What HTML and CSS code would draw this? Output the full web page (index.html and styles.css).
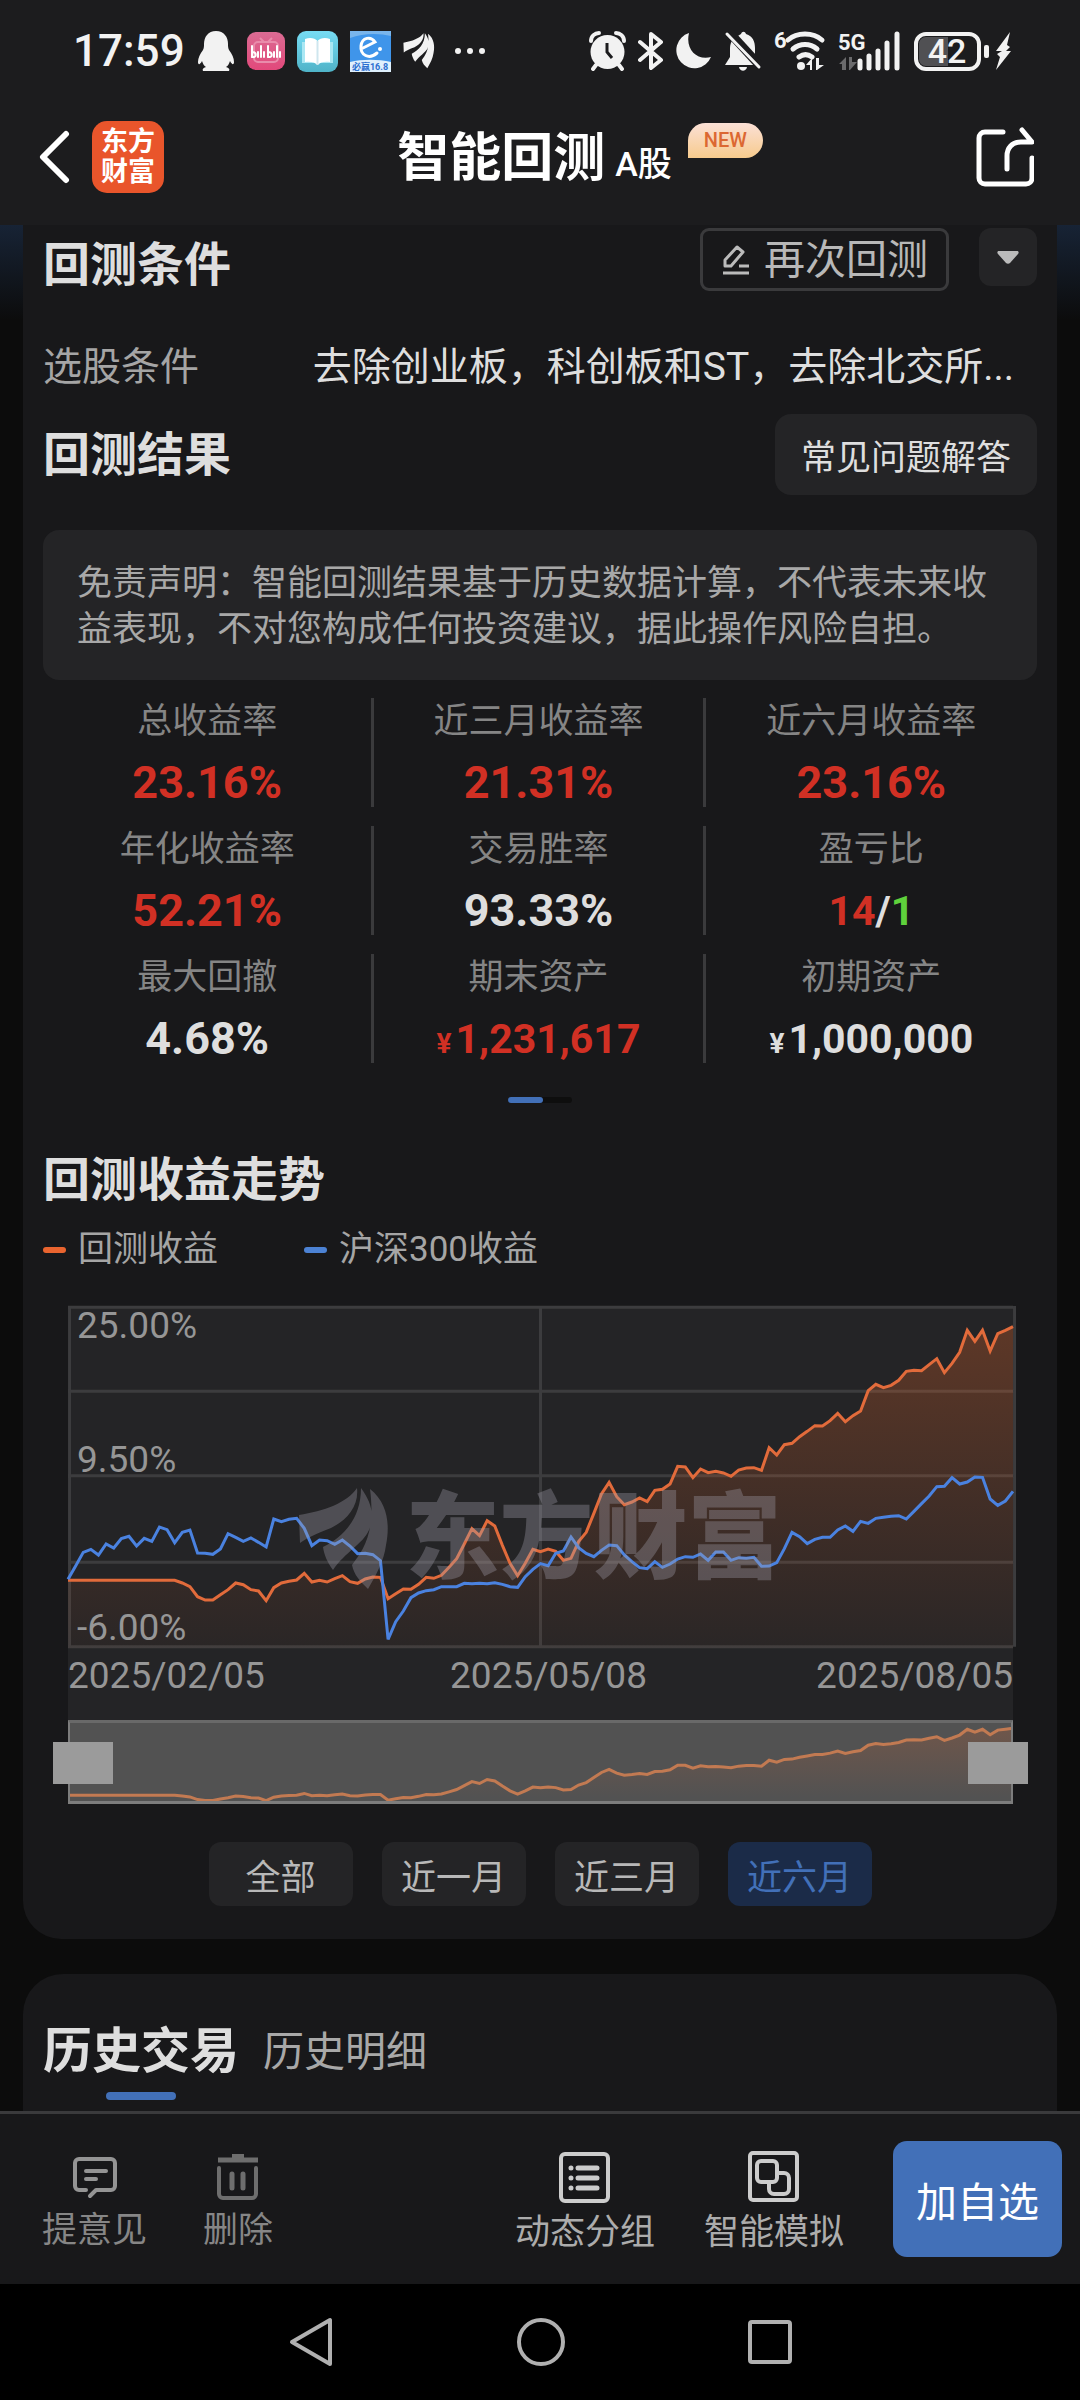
FILE: index.html
```html
<!DOCTYPE html>
<html lang="zh-CN">
<head>
  <meta charset="UTF-8" />
  <meta name="viewport" content="width=device-width, initial-scale=1.0"/>
  <title>智能回测</title>
  <link rel="stylesheet" href="styles.css">
</head>
<body>

  <div class="status-bar">
    <div class="status-left">
      <span class="clock">17:59</span>
      <svg width="38" height="42" viewBox="0 0 38 42" fill="#f2f2f2"><path d="M19 1c-8 0-12 6-12 13 0 2 0 4-1 6-3 4-5 8-5 12 0 3 2 3 4-1 1 3 2 5 4 6-3 1-4 2-3 4h26c1-2 0-3-3-4 2-1 3-3 4-6 2 4 4 4 4 1 0-4-2-8-5-12-1-2-1-4-1-6C31 7 27 1 19 1z"/></svg>
      <svg width="38" height="38" viewBox="0 0 38 38"><defs><linearGradient id="pink" x1="0" y1="0" x2="0" y2="1"><stop offset="0" stop-color="#db6b93"/><stop offset="1" stop-color="#e2497b"/></linearGradient></defs><rect width="38" height="38" rx="9" fill="url(#pink)"/><path d="M13 6l4 4M25 6l-4 4" stroke="#e98cab" stroke-width="2"/><rect x="7" y="10" width="24" height="20" rx="4" fill="none" stroke="#e98cab" stroke-width="2"/><g fill="none" stroke="#fff" stroke-width="2" stroke-linecap="round"><path d="M5 14v11c5 1 5-5 0-5M11 20v5M14 14v11M17 20v5M21 14v11c5 1 5-5 0-5M27 20v5M30 14v11M33 20v5"/></g></svg>
      <svg width="41" height="41" viewBox="0 0 41 41"><defs><linearGradient id="cyan" x1="0" y1="0" x2="0" y2="1"><stop offset="0" stop-color="#77dcf4"/><stop offset="1" stop-color="#4fb3c8"/></linearGradient></defs><rect width="41" height="41" rx="9" fill="url(#cyan)"/><path d="M5 11h31v21H5z" fill="#a9e7f3"/><path d="M8 8c5-2 10-1 12.500 2C23 7 28 6 33 8v23c-5-1-10 0-12.500 3C18 31 13 30 8 31z" fill="#fff"/><path d="M20.500 10v24" stroke="#cfe6ee" stroke-width="2"/></svg>
      <svg width="41" height="41" viewBox="0 0 41 41"><rect width="41" height="41" fill="#3f95ea"/><path d="M0 0h41v5c-12-3-28-3-41 2z" fill="#79b5ec"/><path d="M0 31c12-3 28-3 41 0v10H0z" fill="#dff0fd"/><path d="M13 17l12-6c-4-6-13-5-14 4-1 9 8 14 16 7" fill="none" stroke="#fff" stroke-width="3" stroke-linecap="round"/><circle cx="30" cy="18" r="2" fill="#fff"/><text class="tiny" x="20" y="39" text-anchor="middle" fill="#2b6fd0">必赢16.8</text></svg>
      <svg width="32" height="36" viewBox="0 0 90 104" fill="#f2f2f2"><path d="M0 28C25 24 48 16 58 1c2 18-10 32-26 40C18 46 6 52 1 56zM24 60c20-10 38-28 38-59 10 14 14 26 8 42-6 14-24 22-36 40-6-8-9-16-10-23zM53 78c10-14 24-30 18-76 18 14 20 36 16 56-2 16-10 30-18 44-8-8-14-14-16-24z"/></svg>
      <svg width="40" height="8" viewBox="0 0 40 8" fill="#f2f2f2"><circle cx="11" cy="4" r="3"/><circle cx="23" cy="4" r="3"/><circle cx="35" cy="4" r="3"/></svg>
    </div>
    <div class="status-right">
      <svg width="37" height="40" viewBox="0 0 37 40"><circle cx="18.500" cy="21" r="17" fill="#f2f2f2"/><path d="M2 10c0-5 4-8 8-8M35 10c0-5-4-8-8-8" fill="none" stroke="#f2f2f2" stroke-width="4" stroke-linecap="round"/><path d="M7 34l-3 4M30 34l3 4" stroke="#f2f2f2" stroke-width="4" stroke-linecap="round"/><path d="M18 12v9l5 6" fill="none" stroke="#1c1c1e" stroke-width="3"/></svg>
      <svg width="26" height="40" viewBox="0 0 26 40" fill="none" stroke="#f2f2f2" stroke-width="4" stroke-linejoin="round" stroke-linecap="round"><path d="M2 11l21 18-10 8V3l10 8L2 29"/></svg>
      <svg width="36" height="38" viewBox="0 0 36 38"><path d="M13 1A18 18 0 1 0 35 25C21 29 9 17 13 1z" fill="#f2f2f2"/></svg>
      <svg width="38" height="42" viewBox="0 0 38 42"><path d="M17 4c1-3 4-3 5 0 7 2 9 8 9 14v9l3 8H1l5-8v-9c0-3 1-6 3-9z" fill="#f2f2f2"/><path d="M15 37h8c-1 5-7 5-8 0z" fill="#f2f2f2"/><path d="M4 1l33 36" stroke="#1c1c1e" stroke-width="9"/><path d="M3 4l32 33" stroke="#f2f2f2" stroke-width="3" stroke-linecap="round"/></svg>
      <svg width="52" height="46" viewBox="0 -2 52 46"><text class="sup" x="0" y="18" fill="#f2f2f2">6</text><g fill="none" stroke="#f2f2f2" stroke-width="5" stroke-linecap="round"><path d="M14 10c9-8 25-8 34 0M19 19c7-6 17-6 24 0M25 27c4-3 9-3 13 0"/></g><circle cx="27" cy="36" r="4" fill="#f2f2f2"/><path d="M38 40V28l-6 7h4v5zM42 40V28h3v7h5l-7 5z" fill="#f2f2f2"/></svg>
      <svg width="64" height="46" viewBox="0 -2 64 46"><text class="sup" x="0" y="20" fill="#f2f2f2">5G</text><path d="M8 40V27l-7 7h3v6zM11 40V27h3v5h5l-7 8z" fill="#6a6a6c"/><path d="M22 31v7M31 26v12M40 21v17M49 13v25M59 4v34" stroke="#f2f2f2" stroke-width="5" stroke-linecap="round"/></svg>
      <svg width="98" height="40" viewBox="0 0 98 40"><rect x="2" y="3" width="63" height="35" rx="10" fill="#1c1c1e" stroke="#f2f2f2" stroke-width="4"/><path d="M12 6h22v29H12c-4 0-7-3-7-7V13c0-4 3-7 7-7z" fill="#505053"/><text class="battery" x="33" y="32" text-anchor="middle" fill="#f2f2f2">42</text><rect x="70" y="14" width="5" height="13" rx="2" fill="#f2f2f2"/><path d="M96 1L82 20h6l-5 3 3 3-4 13 15-19h-5l4-4-3-2z" fill="#f2f2f2"/></svg>
    </div>
  </div>

  <header class="app-bar">
    <div class="app-left">
      <button class="icon-btn" aria-label="返回">
        <svg width="31" height="54" viewBox="0 0 31 54" fill="none" stroke="#fff" stroke-width="6" stroke-linecap="round" stroke-linejoin="round"><path d="M27 4L4 27l23 23"/></svg>
      </button>
      <a class="logo" href="#">东方<br>财富</a>
    </div>
    <h1>智能回测<small>A股</small><span class="badge">NEW</span></h1>
    <button class="icon-btn share" aria-label="分享">
      <svg width="58" height="60" viewBox="0 0 58 60" fill="none" stroke="#fff" stroke-width="5" stroke-linecap="round" stroke-linejoin="round"><path d="M27 5H9a6 6 0 0 0-6 6v40a6 6 0 0 0 6 6h41a6 6 0 0 0 6-6V31"/><path d="M31 42V29c0-8 5-14 14-14h11L46 3"/></svg>
    </button>
  </header>

  <main>
    <section class="card">
      <div class="row row-top">
        <h2>回测条件</h2>
        <div class="row-actions">
          <button class="rerun">
            <svg width="28" height="30" viewBox="0 0 28 30" fill="none" stroke="#bbb" stroke-width="3" stroke-linejoin="round"><path d="M3 15L15 2l6 5L9 21H3zM17 21h10M1 28h26"/></svg>
            再次回测
          </button>
          <button class="dropdown" aria-label="展开">
            <svg width="22" height="13" viewBox="0 0 22 13" fill="#bbb"><path d="M2 0h18c2 0 2 2 1 3l-8 9c-1 1-3 1-4 0L1 3C0 2 0 0 2 0z"/></svg>
          </button>
        </div>
      </div>

      <div class="row condition">
        <span class="condition-name">选股条件</span>
        <span class="condition-value">去除创业板，科创板和ST，去除北交所...</span>
      </div>

      <div class="row result">
        <h2>回测结果</h2>
        <button class="faq">常见问题解答</button>
      </div>

      <p class="disclaimer">免责声明：智能回测结果基于历史数据计算，不代表未来收益表现，不对您构成任何投资建议，据此操作风险自担。</p>

      <dl class="stats">
        <div><dt>总收益率</dt><dd class="red">23.16%</dd></div>
        <div><dt>近三月收益率</dt><dd class="red">21.31%</dd></div>
        <div><dt>近六月收益率</dt><dd class="red">23.16%</dd></div>
        <div><dt>年化收益率</dt><dd class="red">52.21%</dd></div>
        <div><dt>交易胜率</dt><dd>93.33%</dd></div>
        <div><dt>盈亏比</dt><dd class="amount"><span class="red">14</span>/<span class="green">1</span></dd></div>
        <div><dt>最大回撤</dt><dd>4.68%</dd></div>
        <div><dt>期末资产</dt><dd class="amount red"><small>¥</small>1,231,617</dd></div>
        <div><dt>初期资产</dt><dd class="amount"><small>¥</small>1,000,000</dd></div>
      </dl>
      <div class="pager"><span></span></div>

      <h2 class="trend-title">回测收益走势</h2>
      <div class="legend">
        <span class="legend-item orange">回测收益</span>
        <span class="legend-item blue">沪深300收益</span>
      </div>

      <div class="chart">
        <div class="plot">
          <svg class="lines" viewBox="0 48 124 1026" preserveAspectRatio="none">
            <defs>
              <linearGradient id="fade" gradientUnits="userSpaceOnUse" x1="0" y1="110" x2="0" y2="1070">
                <stop offset="0" stop-color="#f26a2a" stop-opacity="0.28"/>
                <stop offset="1" stop-color="#f26a2a" stop-opacity="0.03"/>
              </linearGradient>
            </defs>
            <path class="grid" d="M0 52H124M0 304H124M0 557H124M0 817H124M0 1070H124M0.200 48V1074M62 48V1070M124.200 48V1070"/>
            <polygon id="area" fill="url(#fade)"/>
            <polyline id="strategy" class="line line-orange"/>
            <polyline id="index" class="line line-blue"/>
          </svg>
          <span class="y-label y-top">25.00%</span>
          <span class="y-label y-mid">9.50%</span>
          <span class="y-label y-bottom">-6.00%</span>
          <div class="watermark">
            <svg width="90" height="104" viewBox="0 0 90 104" fill="currentColor"><path d="M0 28C25 24 48 16 58 1c2 18-10 32-26 40C18 46 6 52 1 56zM24 60c20-10 38-28 38-59 10 14 14 26 8 42-6 14-24 22-36 40-6-8-9-16-10-23zM53 78c10-14 24-30 18-76 18 14 20 36 16 56-2 16-10 30-18 44-8-8-14-14-16-24z"/></svg>
            <span>东方财富</span>
          </div>
        </div>
        <div class="dates"><span>2025/02/05</span><span class="date-mid">2025/05/08</span><span>2025/08/05</span></div>
        <div class="zoom-bar">
          <svg viewBox="0 16 124 954" preserveAspectRatio="none">
            <defs>
              <linearGradient id="miniFade" gradientUnits="userSpaceOnUse" x1="0" y1="110" x2="0" y2="900">
                <stop offset="0" stop-color="#f26a2a" stop-opacity="0.18"/>
                <stop offset="1" stop-color="#f26a2a" stop-opacity="0"/>
              </linearGradient>
            </defs>
            <polygon id="miniArea" fill="url(#miniFade)"/>
            <polyline id="miniLine" class="line line-mini"/>
          </svg>
          <input type="range" min="0" max="100" value="0" aria-label="开始日期">
          <input type="range" min="0" max="100" value="100" aria-label="结束日期">
        </div>
      </div>

      <div class="ranges">
        <button>全部</button>
        <button>近一月</button>
        <button>近三月</button>
        <button class="active">近六月</button>
      </div>
    </section>

    <section class="card history">
      <div class="tabs">
        <button class="tab active">历史交易</button>
        <button class="tab">历史明细</button>
      </div>
    </section>
  </main>

  <footer class="toolbar">
    <div class="tools tools-left">
      <button class="tool">
        <svg width="52" height="52" viewBox="0 0 52 52" fill="none" stroke="#949494" stroke-width="4" stroke-linecap="round" stroke-linejoin="round"><path d="M17 39h-7a4 4 0 0 1-4-4V12a4 4 0 0 1 4-4h32a4 4 0 0 1 4 4v23a4 4 0 0 1-4 4H27l-6 6M17 20h20M17 28h10"/></svg>
        提意见
      </button>
      <button class="tool">
        <svg width="52" height="52" viewBox="0 0 52 52" fill="none" stroke="#6e6e6e" stroke-width="5" stroke-linecap="round"><path d="M20 6h12" stroke-width="6" stroke-linecap="butt"/><path d="M6 9h40" stroke-linecap="butt"/><path d="M7 17v26a4 4 0 0 0 4 4h29a4 4 0 0 0 4-4V17" stroke-width="4"/><path d="M20 23v14M31 23v14"/></svg>
        删除
      </button>
    </div>
    <div class="tools">
      <button class="tool bright">
        <svg width="52" height="52" viewBox="0 0 52 52" fill="none" stroke="#ccc" stroke-width="5" stroke-linecap="round"><rect x="2" y="3" width="47" height="47" rx="4" stroke-width="4"/><path d="M12 17h0M19 17h19M12 27h0M19 27h19M12 37h0M19 37h19"/></svg>
        动态分组
      </button>
      <button class="tool bright">
        <svg width="52" height="52" viewBox="0 0 52 52" fill="none" stroke="#ccc" stroke-width="4"><rect x="2" y="2" width="47" height="47" rx="3"/><rect x="9" y="10" width="20" height="21" rx="4"/><path d="M29 22h7a5 5 0 0 1 5 5v11a5 5 0 0 1-5 5H26a5 5 0 0 1-5-5v-7"/></svg>
        智能模拟
      </button>
      <button class="add">加自选</button>
    </div>
  </footer>

  <nav class="system-nav">
    <button class="icon-btn" aria-label="后退"><svg width="46" height="52" viewBox="0 0 46 52"><path d="M42 4v44L4 26z"/></svg></button>
    <button class="icon-btn" aria-label="主页"><svg width="48" height="48" viewBox="0 0 48 48"><circle cx="24" cy="24" r="22"/></svg></button>
    <button class="icon-btn" aria-label="最近任务"><svg width="44" height="44" viewBox="0 0 44 44"><rect x="2" y="2" width="40" height="40" rx="2"/></svg></button>
  </nav>

  <script src="chart.js"></script>
</body>
</html>
```
FILE: styles.css
```css
* {
  box-sizing: border-box;
}

body {
  font-family: Roboto, "Noto Sans CJK SC", sans-serif;
  margin: 0;
  min-height: 100vh;
  display: flex;
  flex-direction: column;
  background: #0c0c0c;
  color: #dedede;
}

button {
  font: inherit;
  color: inherit;
  background: none;
  border: 0;
  padding: 0;
  cursor: pointer;
}

svg {
  display: block;
  flex: none;
}

h1, h2, p, dl, dd {
  margin: 0;
}

h2 {
  font-size: 47px;
  line-height: 74px;
  font-weight: 700;
}

/* Phone status bar */
.status-bar {
  height: 102px;
  padding: 0 68px 0 73px;
  display: flex;
  align-items: center;
  justify-content: space-between;
  background: #1c1c1e;
}

.status-left,
.status-right {
  display: flex;
  align-items: center;
  gap: 12px;
}

.clock {
  font-size: 44px;
  font-weight: 500;
  color: #f2f2f2;
}

.tiny {
  font-size: 9px;
  font-weight: 700;
}

.sup {
  font-size: 22px;
  font-weight: 700;
}

.battery {
  font-size: 34px;
  font-weight: 500;
}

/* Title bar */
.app-bar {
  display: grid;
  grid-template-columns: 1fr auto 1fr;
  align-items: center;
  padding: 0 46px 14px 39px;
  height: 123px;
  background: #1c1c1e;
}

.app-left {
  display: flex;
  align-items: center;
  gap: 22px;
}

.logo {
  width: 72px;
  height: 72px;
  border-radius: 15px;
  background: #e9552b;
  color: white;
  font-size: 27px;
  line-height: 30px;
  font-weight: 700;
  text-align: center;
  text-decoration: none;
  padding-top: 6px;
}

h1 {
  position: relative;
  padding: 10px 4px 0 0;
  font-size: 52px;
  line-height: 72px;
  font-weight: 700;
  color: white;
}

h1 small {
  font-size: 34px;
  font-weight: 500;
  margin-left: 10px;
}

.badge {
  position: absolute;
  left: 100%;
  top: 10px;
  margin-left: 12px;
  padding: 0 16px;
  border-radius: 18px 18px 18px 0;
  background: linear-gradient(#fbe0d6, #f7cb8d);
  color: #dc6832;
  font-size: 20px;
  line-height: 35px;
  font-weight: 500;
}

.share {
  justify-self: end;
}

main {
  flex: 1;
  padding: 0 23px;
  display: flex;
  flex-direction: column;
  gap: 35px;
  background: linear-gradient(#172335, #0c0c0c 95px);
}

.card {
  padding: 3px 20px 33px;
  background: #18181a;
  border-radius: 0 0 38px 38px;
}

.row {
  display: flex;
  justify-content: space-between;
  align-items: center;
}

.row-top {
  align-items: flex-start;
}

.row-actions {
  display: flex;
  gap: 30px;
}

.rerun {
  display: flex;
  align-items: center;
  gap: 14px;
  height: 63px;
  padding: 0 18px 0 19px;
  border: 3px solid #3a3a3c;
  border-radius: 9px;
  font-size: 41px;
  line-height: 56px;
  color: #b8b8b8;
}

.dropdown {
  display: flex;
  align-items: center;
  justify-content: center;
  width: 58px;
  height: 58px;
  border-radius: 12px;
  background: #242426;
}

.condition {
  margin-top: 35px;
  font-size: 39px;
  line-height: 60px;
}

.condition-name {
  color: #a5a5a5;
}

.condition-value {
  padding-right: 23px;
}

.result {
  margin-top: 17px;
}

.faq {
  height: 81px;
  padding: 0 26px;
  border-radius: 16px;
  background: #242426;
  font-size: 35px;
}

.disclaimer {
  margin-top: 35px;
  padding: 31px 35px 27px 34px;
  border-radius: 16px;
  background: #242426;
  color: #a8a8a8;
  font-size: 35px;
  line-height: 46px;
}

/* Result figures */
.stats {
  margin-top: 18px;
  display: grid;
  grid-template-columns: repeat(3, 1fr);
  row-gap: 19px;
  text-align: center;
}

.stats div {
  height: 109px;
  border-right: 3px solid #3a3a3c;
}

.stats div:nth-child(3n) {
  border-right: 0;
}

.stats dt {
  font-size: 35px;
  line-height: 48px;
  color: #858585;
}

.stats dd {
  font-size: 45px;
  line-height: 74px;
  font-weight: 700;
}

.stats dd.amount {
  font-size: 41px;
}

.stats small {
  font-size: 28px;
  margin-right: 4px;
}

.red {
  color: #d13024;
}

.green {
  color: #5fd13c;
}

.pager {
  width: 64px;
  height: 6px;
  margin: 34px auto 0;
  border-radius: 3px;
  background: #0e0e0e;
}

.pager span {
  display: block;
  width: 35px;
  height: 6px;
  border-radius: 3px;
  background: #4270b8;
}

.trend-title {
  margin-top: 40px;
}

.legend {
  display: flex;
  gap: 86px;
  margin-top: 10px;
  font-size: 35px;
  line-height: 46px;
  color: #a5a5a5;
}

.legend-item {
  display: flex;
  align-items: center;
  gap: 12px;
}

.legend-item::before {
  content: "";
  width: 23px;
  height: 6px;
  border-radius: 3px;
}

.orange::before {
  background: #e9642f;
}

.blue::before {
  background: #4c82d4;
}

/* Chart */
.chart {
  margin: 33px 24px 0 25px;
  background: #242426;
  color: #969696;
  font-size: 37px;
}

.plot {
  position: relative;
}

.lines {
  width: 100%;
  height: 342px;
  overflow: visible;
}

.grid {
  fill: none;
  stroke: #3c3c3e;
  stroke-width: 3px;
  vector-effect: non-scaling-stroke;
}

.line {
  fill: none;
  stroke-width: 3px;
  vector-effect: non-scaling-stroke;
}

.line-orange {
  stroke: #e26b3b;
}

.line-blue {
  stroke: #4a82e0;
}

.line-mini {
  stroke: #c27a52;
}

.y-label {
  position: absolute;
  left: 9px;
  line-height: 40px;
}

.y-top {
  top: 0;
}

.y-mid {
  top: 134px;
}

.y-bottom {
  bottom: 0;
}

.watermark {
  position: absolute;
  top: 181px;
  left: 0;
  right: 0;
  display: flex;
  justify-content: center;
  align-items: center;
  gap: 16px;
  color: #a3a1ad;
  opacity: 0.34;
  font-size: 94px;
  line-height: 104px;
  font-weight: 900;
}

.dates {
  display: flex;
  justify-content: space-between;
  line-height: 56px;
  padding-bottom: 16px;
}

.date-mid {
  padding-left: 16px;
}

.zoom-bar {
  position: relative;
  height: 84px;
  background: #525252;
}

.zoom-bar::after {
  content: "";
  position: absolute;
  inset: 0;
  border: 2px solid #7d7d7d;
  border-width: 3px 2px;
  border-top-color: #696969;
  pointer-events: none;
}

.zoom-bar svg {
  width: 100%;
  height: 84px;
}

.zoom-bar input {
  position: absolute;
  z-index: 1;
  top: 22px;
  left: -15px;
  width: calc(100% + 30px);
  height: 42px;
  margin: 0;
  background: none;
  appearance: none;
  pointer-events: none;
}

.zoom-bar input::-webkit-slider-thumb {
  appearance: none;
  width: 60px;
  height: 42px;
  background: #9b9b9b;
  pointer-events: auto;
}

.ranges {
  display: flex;
  justify-content: center;
  gap: 29px;
  margin-top: 38px;
}

.ranges button {
  width: 144px;
  height: 64px;
  border-radius: 12px;
  background: #242426;
  color: #b8b8b8;
  font-size: 35px;
}

.ranges .active {
  background: #1b2b48;
  color: #4270b8;
}

/* History card */
.history {
  flex: 1;
  padding: 42px 20px 0;
  border-radius: 40px 40px 0 0;
}

.tabs {
  display: flex;
  gap: 24px;
}

.tab {
  font-size: 41px;
  line-height: 72px;
  color: #a8a8a8;
}

.tab.active {
  font-size: 49px;
  font-weight: 700;
  color: #dedede;
}

.tab::after {
  content: "";
  display: block;
  width: 70px;
  height: 8px;
  margin: 4px auto 0;
  border-radius: 4px;
}

.tab.active::after {
  background: #4270b8;
}

/* Bottom actions */
.toolbar {
  display: flex;
  justify-content: space-between;
  padding: 27px 18px 27px 42px;
  border-top: 3px solid #3a3a3c;
  background: #18181a;
}

.tools {
  display: flex;
  gap: 49px;
}

.tools-left {
  gap: 56px;
}

.tool {
  display: flex;
  flex-direction: column;
  align-items: center;
  padding-top: 10px;
  font-size: 35px;
  line-height: 56px;
  color: #868686;
}

.tool.bright {
  color: #acacac;
  line-height: 60px;
}

.add {
  width: 169px;
  height: 116px;
  border-radius: 14px;
  background: #4270b8;
  color: white;
  font-size: 41px;
}

/* Tool labels run taller than the button, so the bar height follows the button */
.tool,
.add {
  max-height: 116px;
}

.system-nav {
  display: flex;
  justify-content: center;
  align-items: center;
  gap: 183px;
  height: 116px;
  background: black;
}

.system-nav svg {
  fill: none;
  stroke: #b0b0b0;
  stroke-width: 4px;
  stroke-linejoin: round;
}
```
FILE: chart.js
```js
// Plot heights, one per trading day (0 is the top of the drawing)
const strategy = [
  871, 871, 871, 871, 871, 871, 871, 871, 871, 871, 871, 871, 871, 871, 871,
  879, 890, 920, 930, 930, 914, 899, 879, 884, 899, 903, 932, 893, 879, 874,
  870, 850, 876, 871, 876, 866, 857, 875, 880, 867, 861, 862, 926, 911, 897,
  898, 883, 862, 865, 856, 832, 806, 762, 716, 737, 692, 708, 766, 820, 857,
  820, 778, 785, 777, 784, 811, 805, 755, 727, 670, 612, 577, 620, 644, 636,
  624, 635, 601, 598, 582, 529, 531, 563, 537, 548, 544, 549, 559, 540, 534,
  533, 541, 473, 495, 464, 460, 440, 424, 407, 408, 392, 370, 395, 377, 363,
  302, 283, 293, 286, 271, 244, 241, 242, 224, 206, 248, 220, 187, 121, 154,
  121, 183, 131, 121, 110
];

const index = [
  868, 828, 787, 778, 795, 762, 774, 746, 739, 768, 745, 754, 711, 719, 758,
  727, 720, 789, 790, 793, 777, 731, 742, 754, 744, 757, 771, 687, 695, 688,
  685, 715, 767, 750, 752, 763, 750, 768, 791, 790, 794, 812, 1048, 995, 963,
  923, 909, 902, 899, 890, 890, 890, 880, 881, 880, 881, 878, 883, 890, 892,
  860, 838, 821, 827, 790, 783, 741, 773, 790, 800, 781, 765, 767, 795, 815,
  833, 836, 815, 832, 822, 807, 800, 802, 792, 811, 786, 786, 811, 803, 805,
  802, 829, 828, 818, 776, 727, 740, 761, 748, 742, 742, 720, 708, 724, 694,
  700, 685, 682, 679, 677, 687, 664, 641, 618, 590, 589, 563, 582, 576, 561,
  562, 627, 646, 633, 604
];

const toPoints = (values) => values.map((y, x) => x + ',' + y).join(' ');
const setPoints = (id, points) => document.getElementById(id).setAttribute('points', points);

setPoints('strategy', toPoints(strategy));
setPoints('index', toPoints(index));
setPoints('area', '0,1074 ' + toPoints(strategy) + ' 124,1074');
setPoints('miniLine', toPoints(strategy));
setPoints('miniArea', '0,970 ' + toPoints(strategy) + ' 124,970');
```
